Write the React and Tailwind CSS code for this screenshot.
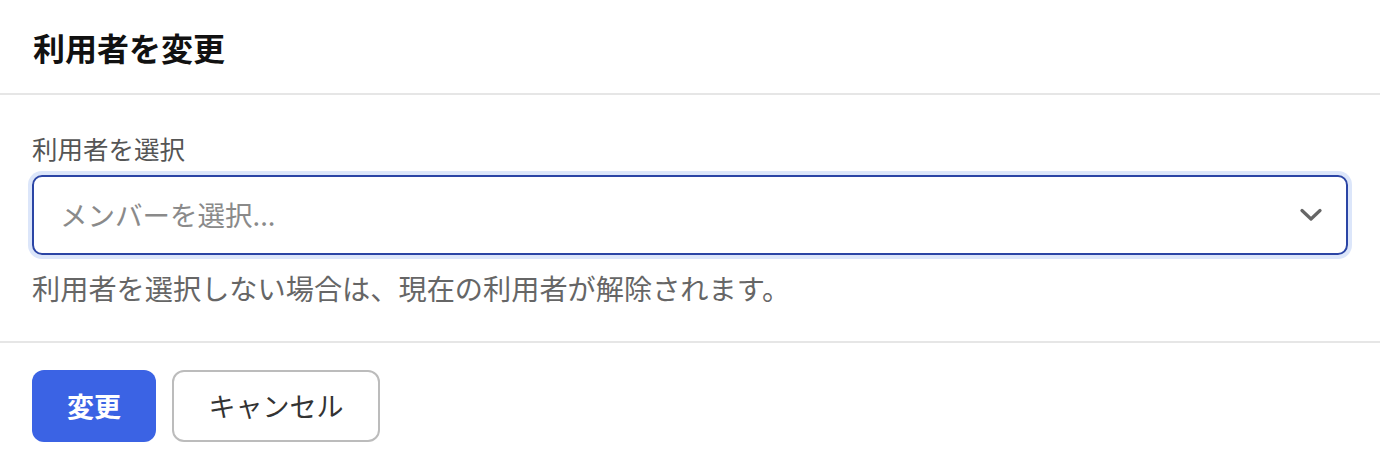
function App() {
  const font = { fontFamily: '"Noto Sans CJK JP", "Noto Sans", sans-serif' };
  return (
    <div
      className="w-[1380px] h-[464px] bg-white font-['Noto_Sans_CJK_JP',_'Noto_Sans',_sans-serif]"
      style={font}
    >
      <div className="h-[95px] flex items-center px-[33px] border-b-2 border-[#e6e6e6]">
        <h1 className="text-[32px] font-bold text-[#111] leading-none">利用者を変更</h1>
      </div>

      <div className="px-[32px] pt-[35px] pb-[33px] border-b-2 border-[#e6e6e6]">
        <p className="text-[25.5px] leading-[36px] text-[#555]">利用者を選択</p>
        <div className="mt-[9px] h-[80px] w-[1316px] rounded-[10px] border-2 border-[#2b45a5] ring-4 ring-[#dce6fa] flex items-center justify-between pl-[26px] pr-[24px]">
          <span className="text-[27.5px] text-[#8a8a8a]">メンバーを選択...</span>
          <svg width="22" height="14" viewBox="0 0 22 14" fill="none">
            <path
              d="M2 2.5 L11 11 L20 2.5"
              stroke="#666"
              strokeWidth="3.2"
              strokeLinecap="round"
              strokeLinejoin="round"
            />
          </svg>
        </div>
        <p className="mt-[13px] text-[28.2px] leading-[40px] text-[#666]">
          利用者を選択しない場合は、現在の利用者が解除されます。
        </p>
      </div>

      <div className="flex gap-[16px] px-[32px] pt-[27px]">
        <button className="h-[72px] w-[124px] rounded-[12px] bg-[#3b63e4] text-white text-[27px] font-bold">
          変更
        </button>
        <button className="h-[72px] w-[208px] rounded-[12px] border-2 border-[#bcbcbc] bg-white text-[#333] text-[27px]">
          キャンセル
        </button>
      </div>
    </div>
  );
}

export default App;
